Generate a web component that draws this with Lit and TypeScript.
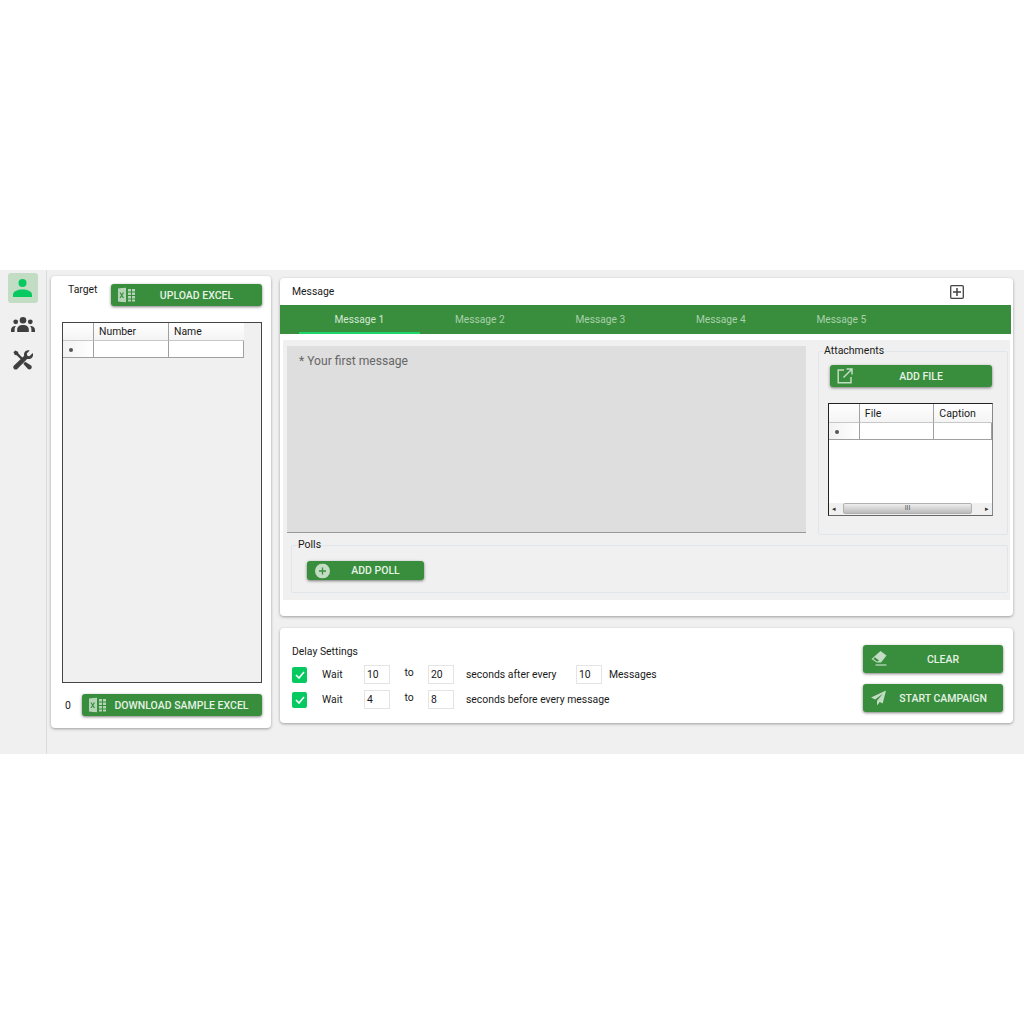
import { LitElement, html, css } from "lit";
import { customElement } from "lit/decorators.js";

const excel = html`<svg class="ic" width="17" height="15" viewBox="0 0 17 15"><path fill="#b5d4b7" d="M0 1 8 0v15L0 14z"/><path fill="#b5d4b7" d="M10 1.500h3v2.600h-3zM14 1.500h3v2.600h-3zM10 5h3v2.600h-3zM14 5h3v2.600h-3zM10 8.500h3v2.600h-3zM14 8.500h3v2.600h-3zM10 12h3v2h-3zM14 12h3v2h-3z"/><path fill="none" stroke="#388e3c" stroke-width="1.200" d="M2 5l3.500 5.500M5.500 5 2 10.500"/></svg>`;
const ext = html`<svg class="ic" width="16" height="16" viewBox="0 0 16 16" fill="none" stroke="#c3dcc4" stroke-width="1.500"><path d="M7 2H1.200v12.800H14V9"/><path d="M9.500 1H15v5.500M15 1 6.500 9.500"/></svg>`;
const plus = html`<svg class="ic" width="15" height="15" viewBox="0 0 15 15"><circle cx="7.500" cy="7.500" r="7.500" fill="#c3dcc4"/><path d="M7.500 4v7M4 7.500h7" stroke="#388e3c" stroke-width="1.300"/></svg>`;
const eraser = html`<svg class="ic" width="16" height="16" viewBox="0 0 16 16"><path fill="#c3dcc4" d="M9.500 0 15.500 4.500 10 11.500H5.500L.5 8z"/><path fill="#388e3c" d="M3.800 6.200 8 9.400 6.800 10.600H5.900L2.400 8z"/><path stroke="#c3dcc4" stroke-width="1.200" d="M4.500 14h11"/></svg>`;
const send = html`<svg class="ic" width="15" height="15" viewBox="0 0 15 15"><path fill="#c3dcc4" d="M15 0 0 7l4.200 2L12 3 6 10.200V15l2.800-3.400 2.900 1.400z"/></svg>`;

const grid = (c1: string, c2: string, w1: number, w2: number, w0: number) => html`
  <div class="grid-row head">
    <span class="rh" style="width:${w0}px"></span>
    <span class="cell" style="width:${w1}px">${c1}</span>
    <span class="cell" style="width:${w2}px">${c2}</span>
  </div>
  <div class="grid-row data">
    <span class="rh" style="width:${w0}px"><i class="dot"></i></span>
    <span class="cell" style="width:${w1}px"></span>
    <span class="cell" style="width:${w2}px"></span>
  </div>`;

const check = html`<span class="check"><svg width="10" height="8" viewBox="0 0 10 8" fill="none" stroke="#fff" stroke-width="1.600"><path d="M1 4l3 3 5-6"/></svg></span>`;

@customElement("app-root")
export class AppRoot extends LitElement {
  static styles = css`
    :host { display: block; padding-top: 270px; background: #fff; font-family: Roboto, "Liberation Sans", sans-serif; font-size: 10.4px; color: #1a1a1a; height: 754px; box-sizing: border-box; }
    * { box-sizing: border-box; }
    .app { display: flex; height: 484px; background: #f0f0f0; }
    .side { width: 47px; border-right: 1px solid #dcdcdc; display: flex; flex-direction: column; align-items: center; padding: 3px 1px 0 0; flex: none; }
    .side-btn { width: 30px; height: 30px; border-radius: 3px; display: flex; align-items: center; justify-content: center; margin-bottom: 7px; }
    .side-btn.active { background: #c3dcc4; }
    .side-btn + .side-btn { height: 30px; margin-bottom: 5px; }
    .card { background: #fff; border-radius: 4px; box-shadow: 0 1px 3px rgba(0,0,0,.35); }
    .left { width: 220px; height: 452px; margin: 6px 0 0 4px; padding: 8px 9px 0 11px; flex: none; display: flex; flex-direction: column; }
    .left-top { display: flex; justify-content: space-between; height: 38px; }
    .left-top .t { margin: 0 0 0 6px; line-height: 12px; }
    .btn { background: #388e3c; color: #e6f2e6; border-radius: 3px; font-weight: 500; font-size: 10.5px; display: flex; align-items: center; box-shadow: 0 1px 3px rgba(0,0,0,.5); position: relative; justify-content: center; flex: none; white-space: nowrap; }
    .btn .ic { position: absolute; top: 50%; transform: translateY(-50%); }
    .upload { width: 151px; height: 22px; padding-left: 20px; }
    .upload .ic { left: 7px; }
    .box-l { width: 200px; height: 361px; border: 1px solid #444; background: #f0f0f0; }
    .grid-row { display: flex; }
    .grid-row.head { height: 18px; line-height: 17px; }
    .grid-row.data { height: 17px; }
    .grid-row .rh { background: linear-gradient(90deg,#f2f2f2,#fff); border-right: 1px solid #a0a0a0; border-bottom: 1px solid #a0a0a0; padding: 7px 0 0 6px; }
    .dot { display: block; width: 4px; height: 4px; border-radius: 50%; background: #555; }
    .grid-row .cell { border-right: 1px solid #a0a0a0; border-bottom: 1px solid #a0a0a0; background: #fff; padding-left: 5px; }
    .grid-row.head .rh, .grid-row.head .cell { background: linear-gradient(#fff,#f4f4f4); border-bottom-color: #c8c8c8; }
    .grid-row.head .cell:last-child { border-right: none; }
    .left-bottom { display: flex; align-items: center; justify-content: space-between; margin-top: 11px; padding-left: 3px; }
    .download { width: 180px; height: 22px; padding-left: 19px; }
    .download .ic { left: 7px; }
    .main { width: 733px; margin: 8px 0 0 9px; flex: none; display: flex; flex-direction: column; gap: 12px; }
    .msg { height: 338px; display: flex; flex-direction: column; }
    .msg-head { height: 27px; display: flex; align-items: center; justify-content: space-between; padding: 0 49px 0 12px; }
    .msg-head svg { margin-top: 1px; }
    .tabs { height: 29px; background: #388e3c; margin-right: 2px; display: flex; padding-left: 19px; }
    .tab { width: 120.500px; display: flex; align-items: center; justify-content: center; color: #a9d0ab; font-size: 10.2px; }
    .tab.on { color: #d4e8d5; border-bottom: 2px solid #1fd66b; padding-top: 2px; }
    .panel { margin: 6px 3px 0; height: 260px; background: #f0f0f0; padding: 6px 2px 0 4px; }
    .upper { display: flex; justify-content: space-between; height: 188px; }
    .ta { width: 519px; height: 187px; background: #dedede; border-bottom: 1px solid #999; padding: 8px 12px; font-size: 12.100px; color: #666; }
    fieldset { margin: 0; border: 1px solid #e0e6ea; border-radius: 2px; padding: 0; }
    legend { padding: 0 1px; margin-left: 4px; line-height: 12px; font-size: 10.500px; color: #1a1a1a; }
    .att { width: 190px; height: 190px; margin-top: -1px; }
    .att-body { padding: 8px 0 0 11px; }
    .addfile { width: 162px; height: 22px; padding-left: 20px; }
    .addfile .ic { left: 7px; }
    .box-a { margin: 16px 0 0 -2px; width: 165px; height: 113px; border: 1px solid #222; border-right-color: #888; border-bottom-color: #666; background: #fff; position: relative; font-size: 10.600px; }
    .box-a .grid-row.head { height: 19px; line-height: 19px; }
    .scroll { position: absolute; left: 0; right: 0; bottom: 0; height: 12px; background: #f0f0f0; display: flex; align-items: center; justify-content: space-between; padding: 0 3px; font-size: 7px; color: #333; }
    .thumb { position: absolute; left: 14px; width: 129px; top: 0; height: 11px; border-radius: 2px; background: linear-gradient(#eee,#bbb); border: 1px solid #b0b0b0; text-align: center; line-height: 9px; font-size: 7px; color: #555; }
    .polls { margin: 5px 0 0 4px; height: 54px; width: 717px; }
    .polls legend { margin-left: 5px; }
    .polls-body { padding: 10px 0 0 15px; }
    .addpoll { width: 117px; height: 19px; padding-left: 20px; }
    .addpoll .ic { left: 8px; }
    .delay { height: 95px; display: flex; justify-content: space-between; padding: 17px 10px 0 12px; }
    .delay-title { line-height: 13px; margin-bottom: 7px; }
    .row { display: flex; align-items: center; height: 19px; margin-bottom: 6px; }
    .check { width: 15px; height: 16px; background: #06c95f; border-radius: 2px; display: flex; align-items: center; justify-content: center; margin-right: 15px; }
    .w { width: 42px; }
    .inp { width: 26px; height: 19px; border: 1px solid #e4e4e4; padding: 0 0 0 2px; line-height: 17px; }
    .to { width: 38px; text-align: center; margin-top: -4px; }
    .s { margin-left: 12px; }
    .s.long { width: 110px; }
    .m { margin-left: 7px; }
    .actions { display: flex; flex-direction: column; gap: 11px; }
    .act { width: 140px; height: 28px; }
    .act .ic { left: 8px; }
    .act.clear, .act.start { padding-left: 20px; }
  `;

  render() {
    return html`<div class="app">
      <nav class="side">
        <div class="side-btn active">
          <svg width="19" height="18" viewBox="0 0 19 18" fill="#06c95f"><circle cx="9.500" cy="4" r="4"/><path d="M0 18v-2.500C0 12.500 4.500 10.500 9.500 10.500S19 12.500 19 15.500V18z"/></svg>
        </div>
        <div class="side-btn">
          <svg width="24" height="18" viewBox="0 0 24 18" fill="#3f3f3f"><circle cx="12" cy="4.200" r="3.300"/><circle cx="4.700" cy="5.800" r="2.400"/><circle cx="19.300" cy="5.800" r="2.400"/><path d="M6.200 16v-2.700C6.200 10.500 9 9 12 9s5.800 1.500 5.800 4.300V16zM0 16v-2C0 11 2.400 9.800 5 10c-.9 1-1.400 2.200-1.400 3.400V16zM24 16v-2c0-3-2.400-4.200-5-4 .9 1 1.400 2.200 1.400 3.400V16z"/></svg>
        </div>
        <div class="side-btn">
          <svg width="20" height="20" viewBox="0 0 20 20" fill="#3f3f3f"><path d="M2.200.5.500 2.200l1.300 2.700 1.900.4 4.800 4.800 1.700-1.700L5.400 3.600 5 1.800z"/><path d="M12.200 11.800l-1.900 1.900 4.400 5.100c1 1 2.600 1 3.400 0 .9-.9.900-2.300 0-3.200z"/><path d="M19.400 3.300l-2.900 2.900-2.200-.5-.5-2.200L16.700.6c-2.300-.8-4.800.3-5.500 2.600-.3.900-.3 1.700 0 2.600L1 15.600c-1 1-1 2.500 0 3.300.9.900 2.400.9 3.300 0l9.800-10c2.800.8 5.600-.8 6-3.700 0-.7 0-1.300-.3-1.900z"/></svg>
        </div>
      </nav>
      <section class="card left">
        <div class="left-top"><span class="t">Target</span><div class="btn upload">${excel}UPLOAD EXCEL</div></div>
        <div class="box-l">${grid("Number", "Name", 75, 75, 31)}</div>
        <div class="left-bottom"><span>0</span><div class="btn download">${excel}DOWNLOAD SAMPLE EXCEL</div></div>
      </section>
      <div class="main">
        <section class="card msg">
          <div class="msg-head"><span>Message</span>
            <svg width="14" height="14" viewBox="0 0 14 14" fill="none" stroke="#444" stroke-width="1.300"><rect x=".7" y=".7" width="12.600" height="12.600" rx="1"/><path d="M7 3v8M3 7h8" stroke-width="1.500"/></svg>
          </div>
          <div class="tabs">
            ${[1, 2, 3, 4, 5].map((n) => html`<div class="tab ${n === 1 ? "on" : ""}">Message ${n}</div>`)}
          </div>
          <div class="panel">
            <div class="upper">
              <div class="ta">* Your first message</div>
              <fieldset class="att">
                <legend>Attachments</legend>
                <div class="att-body">
                  <div class="btn addfile">${ext}ADD FILE</div>
                  <div class="box-a">
                    ${grid("File", "Caption", 75, 58, 31)}
                    <div class="scroll"><span>◂</span><span class="thumb">III</span><span>▸</span></div>
                  </div>
                </div>
              </fieldset>
            </div>
            <fieldset class="polls">
              <legend>Polls</legend>
              <div class="polls-body"><div class="btn addpoll">${plus}ADD POLL</div></div>
            </fieldset>
          </div>
        </section>
        <section class="card delay">
          <div>
            <div class="delay-title">Delay Settings</div>
            <div class="row">${check}<span class="w">Wait</span><span class="inp">10</span><span class="to">to</span><span class="inp">20</span><span class="s long">seconds after every</span><span class="inp">10</span><span class="m">Messages</span></div>
            <div class="row">${check}<span class="w">Wait</span><span class="inp">4</span><span class="to">to</span><span class="inp">8</span><span class="s">seconds before every message</span></div>
          </div>
          <div class="actions">
            <div class="btn act clear">${eraser}CLEAR</div>
            <div class="btn act start">${send}START CAMPAIGN</div>
          </div>
        </section>
      </div>
    </div>`;
  }
}
